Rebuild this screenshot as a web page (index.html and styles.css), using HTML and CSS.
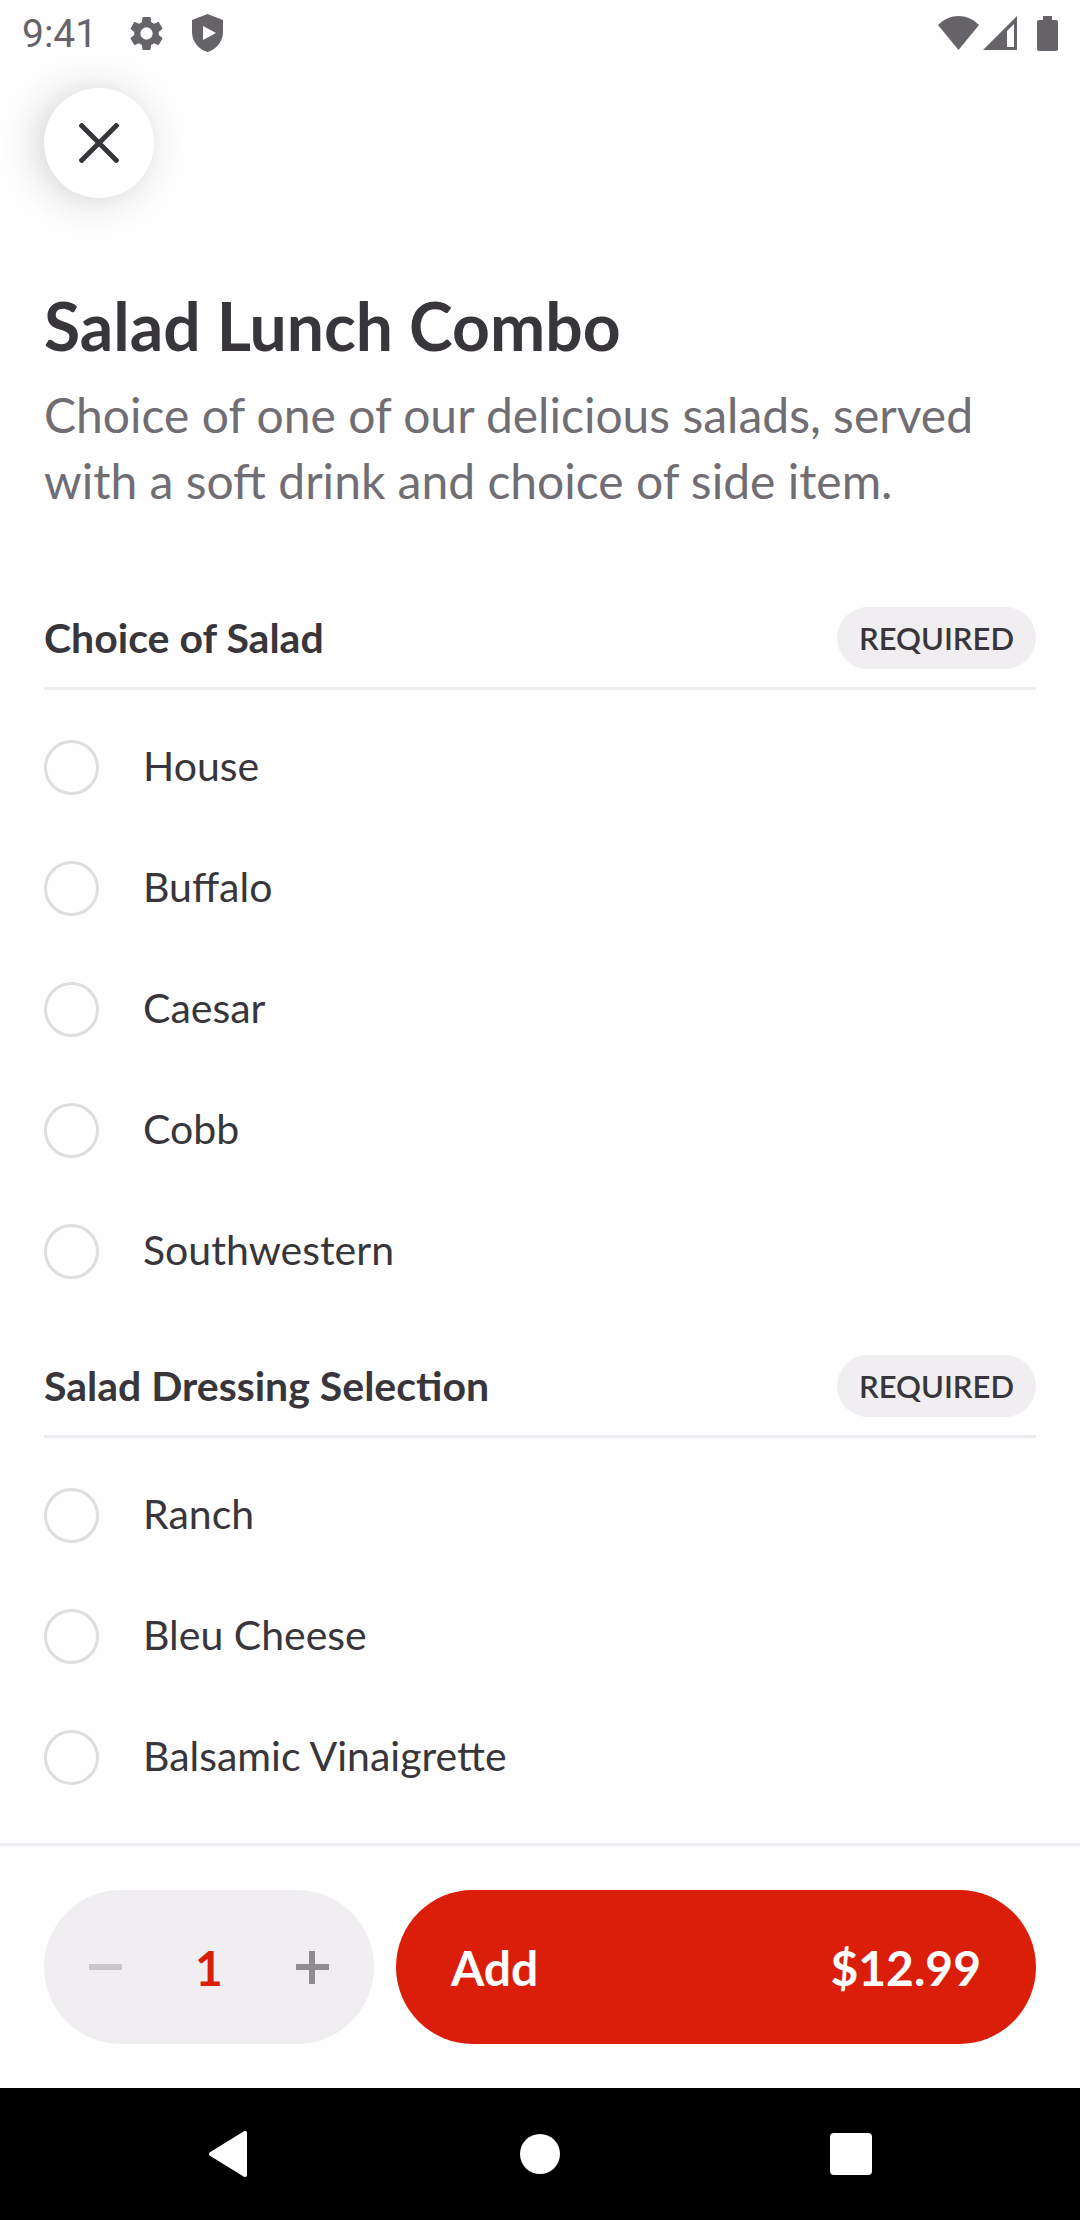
FILE: index.html
```html
<!DOCTYPE html>
<html lang="en">
<head>
    <meta charset="UTF-8">
    <meta name="viewport" content="width=device-width, initial-scale=1.0">
    <title>Salad Lunch Combo</title>
    <link rel="stylesheet" href="styles.css">
</head>
<body>
    <div class="status-bar">
        <span class="clock">9:41</span>
        <svg class="gear" width="41" height="41" viewBox="0 0 24 24"><path d="M19.14 12.94c.04-.3.06-.61.06-.94 0-.32-.02-.64-.07-.94l2.03-1.58c.18-.14.23-.41.12-.61l-1.92-3.32c-.12-.22-.37-.29-.59-.22l-2.39.96c-.5-.38-1.03-.7-1.62-.94l-.36-2.54c-.04-.24-.24-.41-.48-.41h-3.84c-.24 0-.43.17-.47.41l-.36 2.54c-.59.24-1.13.57-1.62.94l-2.39-.96c-.22-.08-.47 0-.59.22L2.74 8.87c-.12.21-.08.47.12.61l2.03 1.58c-.05.3-.09.63-.09.94s.02.64.07.94l-2.03 1.58c-.18.14-.23.41-.12.61l1.92 3.32c.12.22.37.29.59.22l2.39-.96c.5.38 1.03.7 1.62.94l.36 2.54c.05.24.24.41.48.41h3.84c.24 0 .44-.17.47-.41l.36-2.54c.59-.24 1.13-.56 1.62-.94l2.39.96c.22.08.47 0 .59-.22l1.92-3.32c.12-.22.07-.47-.12-.61l-2.01-1.58zM12 15.6A3.6 3.6 0 1 1 12 8.400a3.6 3.6 0 0 1 0 7.200z"/></svg>
        <svg width="31" height="38" viewBox="0 0 31 38"><path fill-rule="evenodd" d="M15.500 0 31 6v12c0 9-6 17-15.500 20C6 35 0 27 0 18V6zM11 12v14l13-7z"/></svg>
        <div class="status-right">
            <svg width="41" height="34" viewBox="0 0 41 34"><path d="M0 9C12-3 29-3 41 9L20.500 34z"/></svg>
            <svg width="34" height="34" viewBox="0 0 34 34"><path fill-rule="evenodd" d="M34 0v34H0zM31 8l-7 7v16h7z"/></svg>
            <svg class="battery" width="21" height="35" viewBox="0 0 21 35"><path d="M6 0h9v4h4q2 0 2 2v27q0 2-2 2H2q-2 0-2-2V6q0-2 2-2h4z"/></svg>
        </div>
    </div>

    <main class="content">
        <button class="close-button" aria-label="Close">
            <svg width="40" height="40" viewBox="0 0 40 40"><path d="M1 1l38 38M39 1L1 39"/></svg>
        </button>
        <h1>Salad Lunch Combo</h1>
        <p class="description">Choice of one of our delicious salads, served with a soft drink and choice of side item.</p>

        <section class="group">
            <div class="group-header">
                <h2>Choice of Salad</h2>
                <span class="badge">REQUIRED</span>
            </div>
            <div class="options">
                <label class="option"><input type="radio" name="salad" value="house"><span>House</span></label>
                <label class="option"><input type="radio" name="salad" value="buffalo"><span>Buffalo</span></label>
                <label class="option"><input type="radio" name="salad" value="caesar"><span>Caesar</span></label>
                <label class="option"><input type="radio" name="salad" value="cobb"><span>Cobb</span></label>
                <label class="option"><input type="radio" name="salad" value="southwestern"><span>Southwestern</span></label>
            </div>
        </section>

        <section class="group">
            <div class="group-header">
                <h2>Salad Dressing Selection</h2>
                <span class="badge">REQUIRED</span>
            </div>
            <div class="options">
                <label class="option"><input type="radio" name="dressing" value="ranch"><span>Ranch</span></label>
                <label class="option"><input type="radio" name="dressing" value="bleu-cheese"><span>Bleu Cheese</span></label>
                <label class="option"><input type="radio" name="dressing" value="balsamic"><span>Balsamic Vinaigrette</span></label>
            </div>
        </section>
    </main>

    <footer class="bottom">
        <div class="order-bar">
            <div class="stepper">
                <button id="minus" aria-label="Remove one" disabled><svg width="33" height="33" viewBox="0 0 33 33"><path d="M0 16h33"/></svg></button>
                <span id="quantity">1</span>
                <button id="plus" aria-label="Add one"><svg width="33" height="33" viewBox="0 0 33 33"><path d="M0 16h33M16 0v33"/></svg></button>
            </div>
            <button class="add-button"><span>Add</span><span id="price">$12.99</span></button>
        </div>
        <nav class="nav-bar">
            <button aria-label="Back"><svg width="42" height="46" viewBox="0 0 42 46"><path d="M37 2v42L3 23z" stroke="#fff" stroke-width="4" stroke-linejoin="round"/></svg></button>
            <button aria-label="Home"><svg width="40" height="40" viewBox="0 0 40 40"><circle cx="20" cy="20" r="20"/></svg></button>
            <button aria-label="Recent apps"><svg width="42" height="42" viewBox="0 0 42 42"><rect width="42" height="42" rx="4"/></svg></button>
        </nav>
    </footer>

    <script>
        var quantity = document.getElementById("quantity");
        var price = document.getElementById("price");
        var minus = document.getElementById("minus");
        var count = 1;

        function changeQuantity(amount) {
            count = Math.max(1, count + amount);
            quantity.textContent = count;
            price.textContent = "$" + (count * 12.99).toFixed(2);
            minus.disabled = count === 1;
        }

        minus.onclick = function() {
            changeQuantity(-1);
        };

        document.getElementById("plus").onclick = function() {
            changeQuantity(1);
        };
    </script>
</body>
</html>
```
FILE: styles.css
```css
* {
    box-sizing: border-box;
}
body {
    font-family: Lato, "Liberation Sans", sans-serif;
    color: #38363a;
    background-color: #fefefe;
    margin: 0;
    min-height: 100vh;
    display: flex;
    flex-direction: column;
}
button {
    font: inherit;
    color: inherit;
    background: none;
    border: none;
    padding: 0;
    cursor: pointer;
}
svg {
    display: block;
}
h1, h2, p {
    margin: 0;
}
.status-bar {
    display: flex;
    align-items: center;
    height: 66px;
    padding: 0 22px;
    color: #666468;
    fill: #666468;
}
.clock {
    padding-top: 2px;
    font-family: Roboto, sans-serif;
    font-size: 39px;
}
.gear {
    margin: 0 25px 0 29px;
}
.status-right {
    display: flex;
    align-items: center;
    gap: 4px;
    margin-left: auto;
}
.battery {
    margin-left: 16px;
}
.content {
    flex: 1;
    padding: 22px 44px 0;
}
.close-button {
    display: flex;
    align-items: center;
    justify-content: center;
    width: 110px;
    height: 110px;
    border-radius: 50%;
    background-color: #fff;
    box-shadow: -6px 2px 36px rgba(56, 54, 58, 0.22);
}
.close-button path {
    stroke: #38363a;
    stroke-width: 5;
}
h1 {
    margin-top: 88px;
    font-size: 66px;
    line-height: 80px;
}
.description {
    margin-top: 16px;
    font-size: 48px;
    line-height: 66px;
    color: #706e72;
}
.group {
    margin-top: 93px;
}
.group + .group {
    margin-top: 43px;
}
.group-header {
    display: flex;
    align-items: center;
    justify-content: space-between;
    padding-bottom: 18px;
    border-bottom: 3px solid #efedf1;
}
h2 {
    font-size: 41px;
    line-height: 62px;
}
.badge {
    padding: 0 22px;
    border-radius: 31px;
    background-color: #f0eef1;
    font-size: 31px;
    font-weight: 600;
    line-height: 62px;
}
.options {
    padding-top: 17px;
}
.option {
    display: flex;
    align-items: center;
    gap: 44px;
    height: 121px;
    font-size: 41px;
    cursor: pointer;
}
.option span {
    padding-bottom: 5px;
}
.option input {
    appearance: none;
    width: 55px;
    height: 55px;
    margin: 0;
    border: 3px solid #dfdde1;
    border-radius: 50%;
}
.option input:checked {
    border: 16px solid #db1e0a;
}
.bottom {
    position: sticky;
    bottom: 0;
    background-color: #fefefe;
}
.order-bar {
    display: flex;
    gap: 22px;
    padding: 44px;
    border-top: 3px solid #efedf1;
    font-size: 48px;
    font-weight: bold;
}
.stepper {
    display: flex;
    align-items: center;
    justify-content: space-between;
    width: 330px;
    height: 154px;
    padding: 0 45px;
    border-radius: 77px;
    background-color: #f0eef1;
    color: #db1e0a;
}
.stepper path {
    stroke: #8e8c90;
    stroke-width: 6;
}
.stepper button:disabled path {
    stroke: #c8c6ca;
}
.add-button {
    flex: 1;
    display: flex;
    align-items: center;
    justify-content: space-between;
    padding: 0 55px;
    border-radius: 77px;
    background-color: #db1e0a;
    color: #fff;
}
.nav-bar {
    display: flex;
    align-items: center;
    justify-content: center;
    gap: 270px;
    height: 132px;
    background-color: #000;
    fill: #fff;
}
```
